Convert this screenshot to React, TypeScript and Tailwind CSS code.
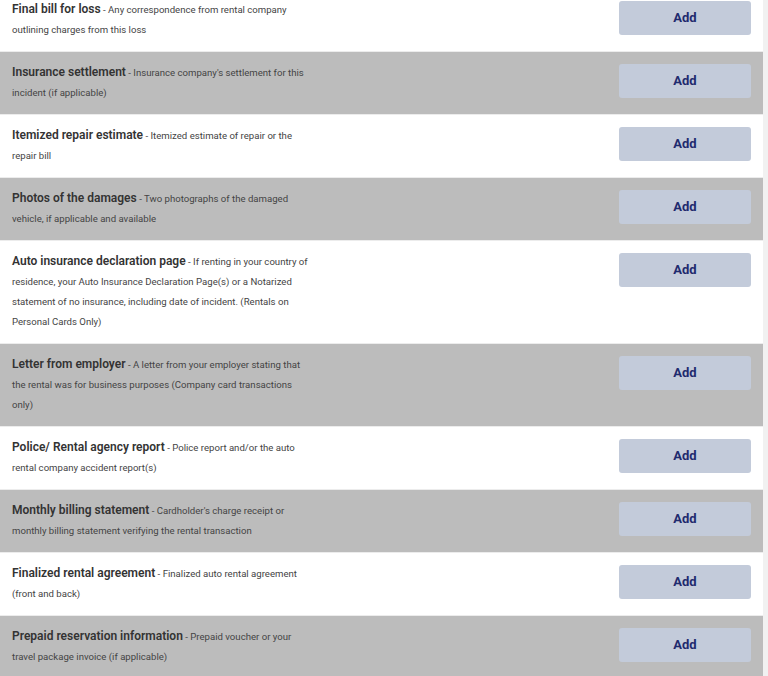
const docs = [
  {
    title: "Final bill for loss",
    desc: "Any correspondence from rental company outlining charges from this loss",
  },
  {
    title: "Insurance settlement",
    desc: "Insurance company's settlement for this incident (if applicable)",
  },
  {
    title: "Itemized repair estimate",
    desc: "Itemized estimate of repair or the repair bill",
  },
  {
    title: "Photos of the damages",
    desc: "Two photographs of the damaged vehicle, if applicable and available",
  },
  {
    title: "Auto insurance declaration page",
    desc: "If renting in your country of residence, your Auto Insurance Declaration Page(s) or a Notarized statement of no insurance, including date of incident. (Rentals on Personal Cards Only)",
  },
  {
    title: "Letter from employer",
    desc: "A letter from your employer stating that the rental was for business purposes (Company card transactions only)",
  },
  {
    title: "Police/ Rental agency report",
    desc: "Police report and/or the auto rental company accident report(s)",
  },
  {
    title: "Monthly billing statement",
    desc: "Cardholder's charge receipt or monthly billing statement verifying the rental transaction",
  },
  {
    title: "Finalized rental agreement",
    desc: "Finalized auto rental agreement (front and back)",
  },
  {
    title: "Prepaid reservation information",
    desc: "Prepaid voucher or your travel package invoice (if applicable)",
  },
];

export default function App() {
  return (
    <div
      className="h-[676px] w-[768px] overflow-hidden bg-[#f1f1f1] flex"
      style={{ fontFamily: "Roboto, 'Noto Sans', Arial, sans-serif" }}
    >
      <div className="w-[763px] -mt-[11px] bg-white">
        {docs.map((d, i) => (
          <div
            key={d.title}
            className={
              "flex justify-between items-start pl-3 pr-3 pt-[11px] pb-[11px] border-b border-[#ececec] " +
              (i % 2 === 1 ? "bg-[#bcbcbc]" : "bg-white")
            }
          >
            <p className="w-[300px] text-[9.6px] leading-[20px] text-[#444]">
              <span className="text-[12px] leading-none font-semibold text-[#333]">{d.title}</span>
              {" - "}
              {d.desc}
            </p>
            <button className="mt-px w-[132px] h-[34px] rounded-[3px] bg-[#c3cbda] text-[13px] font-bold text-[#1f2a6e]">
              Add
            </button>
          </div>
        ))}
      </div>
    </div>
  );
}
